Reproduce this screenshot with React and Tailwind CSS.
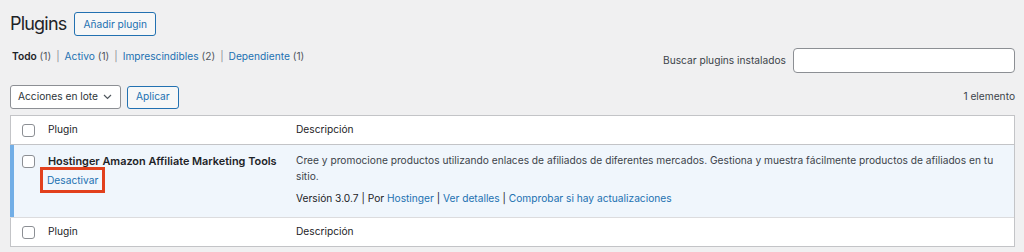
import React from 'react';

const font = { fontFamily: 'Inter, "Liberation Sans", sans-serif' };

const Check = () => (
  <span className="block w-[13px] h-[13px] rounded-[3px] border border-[#8c8f94] bg-white" />
);

const Sep = () => <span className="mx-[5px] text-[#8c8f94]">|</span>;

export default function App() {
  return (
    <div
      className="h-[252px] w-[1024px] bg-[#f0f0f1] pl-[10px] pr-[9px] text-[10.2px] text-[#1d2327] antialiased"
      style={font}
    >
      {/* Title */}
      <div className="flex items-center gap-[8px] pt-[12px]">
        <h1 className="text-[18px] leading-[24px] font-normal tracking-[-0.8px] text-[#1d2327]">Plugins</h1>
        <button className="h-[24px] rounded-[3px] border border-[#2271b1] bg-[#f6f7f7] px-[8px] text-[10.2px] leading-[22px] text-[#2271b1]">
          Añadir plugin
        </button>
      </div>

      {/* Filters + search */}
      <div className="flex items-start justify-between">
        <ul className="mt-[10px] flex items-center pl-[2px] leading-[20px]">
          <li><span className="font-semibold text-[#1d2327]">Todo</span> <span className="text-[#50575e]">(1)</span></li>
          <Sep />
          <li><span className="text-[#2271b1]">Activo</span> <span className="text-[#50575e]">(1)</span></li>
          <Sep />
          <li><span className="text-[#2271b1]">Imprescindibles</span> <span className="text-[#50575e]">(2)</span></li>
          <Sep />
          <li><span className="text-[#2271b1]">Dependiente</span> <span className="text-[#50575e]">(1)</span></li>
        </ul>
        <div className="mt-[12px] flex items-center gap-[7px]">
          <label className="text-[10.2px] text-[#3c434a]">Buscar plugins instalados</label>
          <div className="h-[25px] w-[222px] rounded-[4px] border border-[#8c8f94] bg-white" />
        </div>
      </div>

      {/* Tablenav */}
      <div className="mt-[12px] flex items-center justify-between">
        <div className="flex items-center gap-[6px]">
          <div className="flex h-[24px] w-[111px] items-center justify-between rounded-[3px] border border-[#8c8f94] bg-white pl-[7px] pr-[8px] text-[#2c3338]">
            <span>Acciones en lote</span>
            <svg width="9" height="6" viewBox="0 0 9 6" fill="none">
              <path d="M1 1l3.5 3.5L8 1" stroke="#50575e" strokeWidth="1.2" />
            </svg>
          </div>
          <button className="h-[23px] rounded-[3px] border border-[#2271b1] bg-[#f6f7f7] px-[8px] text-[#2271b1]">
            Aplicar
          </button>
        </div>
        <span className="text-[#3c434a]">1 elemento</span>
      </div>

      {/* Table */}
      <div className="mt-[6px] border border-[#c3c4c7] bg-white">
        <div className="grid h-[29px] grid-cols-[24px_250px_1fr] items-center border-b border-[#c3c4c7]">
          <div className="flex justify-end"><Check /></div>
          <div className="pl-[13px]">Plugin</div>
          <div className="pl-[11px]">Descripción</div>
        </div>

        <div className="-ml-px grid h-[73px] grid-cols-[25px_250px_1fr] border-b border-[#dcdcde] bg-[#f0f6fc] shadow-[inset_4px_0_0_#72aee6]">
          <div className="flex justify-end pt-[10px]"><Check /></div>
          <div className="pl-[13px] pt-[8px]">
            <div className="text-[10.9px] font-semibold leading-[16px] text-[#1d2327]">Hostinger Amazon Affiliate Marketing Tools</div>
            <div className="-ml-[8px] mt-[-2px] w-fit border-[3px] border-[#e2401c] px-[4px] leading-[20px] text-[#2271b1]">
              Desactivar
            </div>
          </div>
          <div className="pl-[11px] pt-[8px] pr-[10px] leading-[15.5px]">
            <p className="text-[#3c434a]">
              Cree y promocione productos utilizando enlaces de afiliados de diferentes mercados. Gestiona y muestra fácilmente productos de afiliados en tu<br />sitio.
            </p>
            <p className="mt-[7px] text-[#1d2327]">
              Versión 3.0.7 | Por <span className="text-[#2271b1]">Hostinger</span> | <span className="text-[#2271b1]">Ver detalles</span> | <span className="text-[#2271b1]">Comprobar si hay actualizaciones</span>
            </p>
          </div>
        </div>

        <div className="grid h-[28px] grid-cols-[24px_250px_1fr] items-center">
          <div className="flex justify-end"><Check /></div>
          <div className="pl-[13px]">Plugin</div>
          <div className="pl-[11px]">Descripción</div>
        </div>
      </div>
    </div>
  );
}
